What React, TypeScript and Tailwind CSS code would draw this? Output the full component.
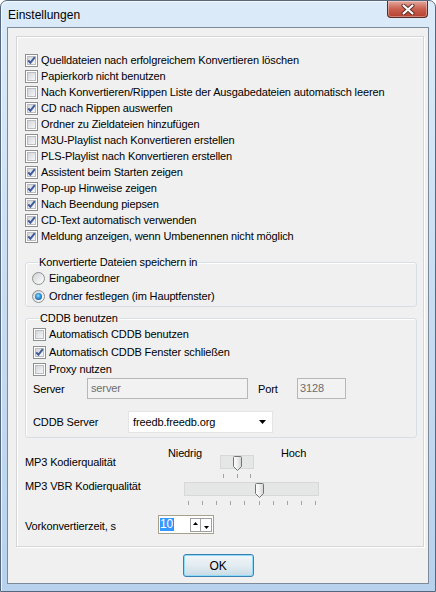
import React from 'react';

const checks: [string, boolean][] = [
  ['Quelldateien nach erfolgreichem Konvertieren löschen', true],
  ['Papierkorb nicht benutzen', false],
  ['Nach Konvertieren/Rippen Liste der Ausgabedateien automatisch leeren', false],
  ['CD nach Rippen auswerfen', true],
  ['Ordner zu Zieldateien hinzufügen', false],
  ['M3U-Playlist nach Konvertieren erstellen', false],
  ['PLS-Playlist nach Konvertieren erstellen', false],
  ['Assistent beim Starten zeigen', true],
  ['Pop-up Hinweise zeigen', true],
  ['Nach Beendung piepsen', true],
  ['CD-Text automatisch verwenden', true],
  ['Meldung anzeigen, wenn Umbenennen nicht möglich', true],
];

const Checkbox: React.FC<{ checked: boolean }> = ({ checked }) => (
  <span className="relative block w-[13px] h-[13px] shrink-0 border border-[#8e8f8f] bg-white p-[1px]">
    <span className="block w-full h-full border border-[#b9bcc0] bg-gradient-to-br from-[#d3d5d9] to-[#f7f7f8]" />
    {checked && (
      <svg className="absolute inset-0" width="11" height="11" viewBox="0 0 11 11">
        <path d="M2.2 5.4 L4.4 7.8 L8.8 2.2" fill="none" stroke="#3f5a98" strokeWidth="2" />
      </svg>
    )}
  </span>
);

const Radio: React.FC<{ checked: boolean }> = ({ checked }) => (
  <span className="flex items-center justify-center w-[13px] h-[13px] shrink-0 rounded-full border border-[#8e8f8f] bg-gradient-to-br from-[#cfd2d6] to-[#ffffff]">
    {checked && (
      <span className="block w-[7px] h-[7px] rounded-full bg-[radial-gradient(circle_at_45%_40%,#8fe0fb_0%,#2f8fd6_45%,#163f7a_100%)]" />
    )}
  </span>
);

const Thumb: React.FC<{ id: string }> = ({ id }) => (
  <svg width="9" height="15" viewBox="0 0 9 15">
    <defs>
      <linearGradient id={id} x1="0" y1="0" x2="1" y2="0">
        <stop offset="0" stopColor="#ffffff" />
        <stop offset="0.5" stopColor="#eeeeee" />
        <stop offset="1" stopColor="#d2d2d2" />
      </linearGradient>
    </defs>
    <path d="M1.5 0.5 H7.5 Q8.5 0.5 8.5 1.5 V10.5 L4.5 14.5 L0.5 10.5 V1.5 Q0.5 0.5 1.5 0.5 Z" fill={`url(#${id})`} stroke="#737373" />
  </svg>
);

const Slider: React.FC<{ id: string; trackClass: string; thumbClass: string; tickClass: string; ticks: number }> = ({
  id,
  trackClass,
  thumbClass,
  tickClass,
  ticks,
}) => (
  <div className="flex flex-col">
    <div className={`relative h-[14px] border border-[#d8d8d8] bg-[#e5e7e7] ${trackClass}`}>
      <div className={`absolute top-0 ${thumbClass}`}>
        <Thumb id={id} />
      </div>
    </div>
    <div className={`flex justify-between mt-[5px] ${tickClass}`}>
      {Array.from({ length: ticks }).map((_, i) => (
        <span key={i} className="block w-[1px] h-[4px] bg-[#a3a3a3]" />
      ))}
    </div>
  </div>
);

export default function App() {
  return (
    <div className="w-[436px] h-[592px] flex flex-col rounded-t-[7px] border border-[#56687d] bg-gradient-to-b from-[#dcebf9] via-[#c8ddf2] to-[#b8d1ec] shadow-[inset_1px_1px_0_rgba(255,255,255,0.7)] font-['Liberation_Sans',Arial,sans-serif] text-[11px] tracking-[-0.13px] text-black">
      {/* title bar */}
      <div className="h-[26px] flex items-start justify-between shrink-0">
        <span className="ml-[7px] mt-[6px] text-[12px] leading-[16px] tracking-normal">Einstellungen</span>
        <div className="mr-[7px] w-[41px] h-[17px] flex items-center justify-center rounded-b-[4px] border border-t-0 border-[#5c2a22] bg-gradient-to-b from-[#e3a89d] via-[#c9604f] to-[#b5402e] shadow-[inset_0_0_0_1px_rgba(255,255,255,0.35)]">
          <svg width="14" height="11" viewBox="0 0 14 11">
            <path d="M2.5 1.5 L11.5 9.5 M11.5 1.5 L2.5 9.5" stroke="#5a2a22" strokeWidth="4" strokeLinecap="round" />
            <path d="M2.5 1.5 L11.5 9.5 M11.5 1.5 L2.5 9.5" stroke="#ffffff" strokeWidth="2.2" strokeLinecap="round" />
          </svg>
        </div>
      </div>

      {/* client area */}
      <div className="mx-[6px] mb-[7px] flex-1 flex flex-col border border-[#7c8a9a] bg-[#f0f0f0]">
        <div className="ml-[8px] mr-[4px] mt-[8px] h-[511px] flex flex-col border border-[#d5d5d5] shadow-[inset_1px_1px_0_#ffffff,1px_1px_0_#ffffff] pl-[8px] pt-[15px]">
          {checks.map(([label, on]) => (
            <div key={label} className="h-[16px] flex items-center gap-[3px]">
              <Checkbox checked={on} />
              <span className="leading-[14px] whitespace-nowrap">{label}</span>
            </div>
          ))}

          <fieldset className="mt-[11px] w-[392px] rounded-[3px] border border-[#d5dfe5] shadow-[inset_1px_1px_0_#ffffff] pl-[6px] pb-[1px]">
            <legend className="ml-[6px] px-[1px] leading-[14px]">Konvertierte Dateien speichern in</legend>
            <div className="h-[18px] flex items-center gap-[4px]">
              <Radio checked={false} />
              <span>Eingabeordner</span>
            </div>
            <div className="h-[18px] flex items-center gap-[4px]">
              <Radio checked />
              <span>Ordner festlegen (im Hauptfenster)</span>
            </div>
          </fieldset>

          <fieldset className="mt-[4px] w-[392px] rounded-[3px] border border-[#d5dfe5] shadow-[inset_1px_1px_0_#ffffff] pl-[7px] pb-[4px]">
            <legend className="ml-[6px] px-[1px] leading-[14px]">CDDB benutzen</legend>
            <div className="h-[18px] flex items-center gap-[3px]">
              <Checkbox checked={false} />
              <span>Automatisch CDDB benutzen</span>
            </div>
            <div className="h-[18px] flex items-center gap-[3px]">
              <Checkbox checked />
              <span>Automatisch CDDB Fenster schließen</span>
            </div>
            <div className="h-[16px] flex items-center gap-[3px]">
              <Checkbox checked={false} />
              <span>Proxy nutzen</span>
            </div>
            <div className="mt-[1px] h-[21px] flex items-center">
              <span className="w-[54px] pt-[1px]">Server</span>
              <div className="w-[161px] h-[21px] flex items-center border border-[#b5b7bb] bg-[#f2f2f2] pl-[3px] text-[#6d6d6d]">
                server
              </div>
              <span className="ml-[10px] w-[39px] pt-[1px]">Port</span>
              <div className="w-[49px] h-[21px] flex items-center border border-[#b5b7bb] bg-[#f2f2f2] pl-[2px] text-[#6d6d6d]">
                3128
              </div>
            </div>
            <div className="mt-[12px] h-[22px] flex items-center">
              <span className="w-[95px] pt-[1px]">CDDB Server</span>
              <div className="w-[145px] h-[22px] flex items-center justify-between border border-[#e4e4e4] bg-white pl-[4px] pr-[6px]">
                <span>freedb.freedb.org</span>
                <svg width="7" height="4" viewBox="0 0 7 4">
                  <path d="M0 0 H7 L3.5 4 Z" fill="#000" />
                </svg>
              </div>
            </div>
          </fieldset>

          {/* MP3 quality */}
          <div className="mt-[8px] flex">
            <span className="w-[143px] pt-[9px] leading-[14px]">MP3 Kodierqualität</span>
            <span className="w-[52px] leading-[14px]">Niedrig</span>
            <div className="mt-[9px]">
              <Slider id="t1" trackClass="w-[34px]" thumbClass="left-[12px]" tickClass="pl-[3px] pr-[3px]" ticks={3} />
            </div>
            <span className="ml-[27px] leading-[14px]">Hoch</span>
          </div>

          <div className="mt-[1px] flex">
            <span className="w-[159px] leading-[14px]">MP3 VBR Kodierqualität</span>
            <div className="mt-[3px]">
              <Slider id="t2" trackClass="w-[135px]" thumbClass="left-[70px]" tickClass="pl-[4px] pr-[3px]" ticks={10} />
            </div>
          </div>

          <div className="mt-[10px] flex items-center">
            <span className="w-[133px] pt-[3px] leading-[14px]">Vorkonvertierzeit, s</span>
            <div className="w-[56px] h-[19px] flex items-center border border-[#a7a08c] bg-white pl-[1px] pr-[1px]">
              <span className="h-[13px] bg-[#3399ff] text-white text-[12px] leading-[13px]">10</span>
              <span className="block w-[1px] h-[13px] bg-[#d8602a]" />
              <div className="ml-auto flex h-[14px] border border-[#a0a0a0]">
                <span className="w-[10px] flex justify-center pt-[3px] border-r border-[#a0a0a0]">
                  <svg width="5" height="3" viewBox="0 0 5 3">
                    <path d="M0 3 H5 L2.5 0 Z" fill="#000" />
                  </svg>
                </span>
                <span className="w-[10px] flex justify-center pt-[7px]">
                  <svg width="5" height="3" viewBox="0 0 5 3">
                    <path d="M0 0 H5 L2.5 3 Z" fill="#000" />
                  </svg>
                </span>
              </div>
            </div>
          </div>
        </div>

        <button
          type="button"
          className="self-center mt-[7px] w-[71px] h-[23px] rounded-[3px] border border-[#3c7fb1] bg-gradient-to-b from-[#f1f6f9] via-[#e3ecf1] to-[#c9dbe6] shadow-[inset_0_0_0_1px_#8fdcf8] text-[12px] leading-[14px]"
        >
          OK
        </button>
      </div>
    </div>
  );
}
